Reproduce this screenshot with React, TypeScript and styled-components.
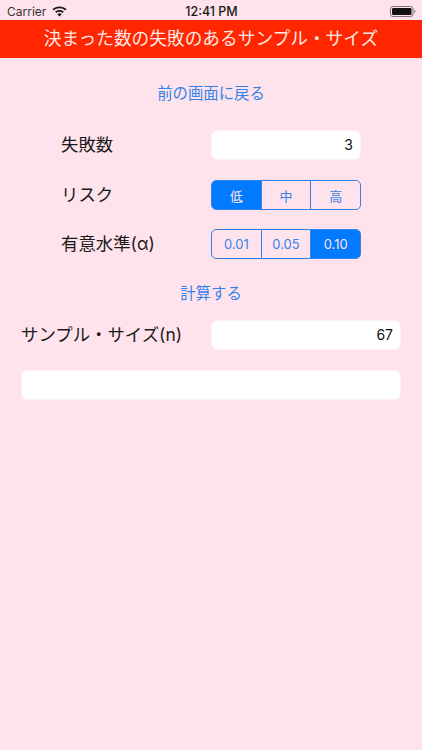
import React, { useState } from 'react'
import styled, { createGlobalStyle } from 'styled-components'

const JP = `Inter, "Noto Sans CJK JP", sans-serif`

const GlobalStyle = createGlobalStyle`
  html, body {
    margin: 0;
    padding: 0;
    background: #ffe3ec;
  }
`

const Screen = styled.div`
  width: 422px;
  height: 750px;
  overflow: hidden;
  background: #ffe3ec;
  font-family: ${JP};
  color: #111;
`

const StatusBar = styled.div`
  height: 20px;
  box-sizing: border-box;
  padding: 2px 6px 0 7px;
  display: grid;
  grid-template-columns: 1fr auto 1fr;
  align-items: center;
  font-size: 12px;
`

const Carrier = styled.div`
  display: flex;
  align-items: center;
  gap: 6px;
  color: #333;
`

const Clock = styled.div`
  font-weight: 500;
  font-size: 12.5px;
  color: #1a1a1a;
`

const BatteryWrap = styled.div`
  display: flex;
  justify-content: flex-end;
`

const Header = styled.div`
  height: 38px;
  background: #ff2600;
  color: #ffe9e4;
  font-size: 17.7px;
  line-height: 38px;
  text-align: center;
  white-space: nowrap;
`

const Body = styled.div`
  padding: 0 21px;
  display: flex;
  flex-direction: column;
`

const LinkButton = styled.button<{ $top: number }>`
  align-self: center;
  margin-top: ${(p) => p.$top}px;
  padding: 0;
  border: 0;
  background: none;
  color: #3583ea;
  font-family: ${JP};
  font-size: 15.4px;
  line-height: 20px;
`

const Row = styled.div<{ $top: number; $inset?: boolean }>`
  display: grid;
  grid-template-columns: ${(p) => (p.$inset ? '150px 150px' : '190px 190px')};
  align-items: center;
  margin-top: ${(p) => p.$top}px;
  padding-left: ${(p) => (p.$inset ? '40px' : '0')};
  height: 30px;
`

const Label = styled.div`
  font-size: 17.4px;
  line-height: 28px;
  color: #1a1a1a;
  white-space: nowrap;
`

const Field = styled.div<{ $full?: boolean }>`
  height: 30px;
  box-sizing: border-box;
  padding: 0 7px;
  background: #fff;
  border: 1px solid #fdf1f5;
  border-radius: 6px;
  font-size: 14px;
  line-height: 28px;
  text-align: right;
  color: #111;
  ${(p) => (p.$full ? 'width: 380px; margin-top: 20px;' : '')}
`

const Segments = styled.div`
  display: flex;
  height: 30px;
  box-sizing: border-box;
  border: 1px solid #3583ea;
  border-radius: 5px;
  overflow: hidden;
`

const Segment = styled.button<{ $active: boolean }>`
  flex: 1;
  padding: 0;
  border: 0;
  border-left: 1px solid #3583ea;
  background: ${(p) => (p.$active ? '#007aff' : 'transparent')};
  color: ${(p) => (p.$active ? '#ffe3ec' : '#3583ea')};
  font-family: ${JP};
  font-size: 13px;
  &:first-child {
    border-left: 0;
  }
`

const SegmentGroup = ({ items, initial }: { items: string[]; initial: number }) => {
  const [active, setActive] = useState(initial)
  return (
    <Segments>
      {items.map((item, i) => (
        <Segment key={item} $active={i === active} onClick={() => setActive(i)}>
          {item}
        </Segment>
      ))}
    </Segments>
  )
}

const WifiIcon = () => (
  <svg width="15" height="11" viewBox="0 0 15 11" fill="#1a1a1a">
    <path d="M7.5 0.4C4.8 0.4 2.4 1.4 0.5 3.1L1.8 4.5C3.3 3.1 5.3 2.3 7.5 2.3s4.2 0.8 5.7 2.2l1.3-1.4C12.6 1.4 10.2 0.4 7.5 0.4z" />
    <path d="M7.5 3.9C5.8 3.9 4.3 4.5 3.1 5.6l1.3 1.4C5.2 6.2 6.3 5.8 7.5 5.8s2.3 0.4 3.1 1.2l1.3-1.4C10.7 4.5 9.2 3.9 7.5 3.9z" />
    <path d="M7.5 7.3c-0.9 0-1.6 0.3-2.2 0.9L7.5 10.6l2.2-2.4C9.1 7.6 8.4 7.3 7.5 7.3z" />
  </svg>
)

const BatteryIcon = () => (
  <svg width="26" height="11" viewBox="0 0 26 11">
    <rect x="0.5" y="0.5" width="22.5" height="10" rx="2.5" fill="none" stroke="#777" />
    <rect x="2" y="2" width="19.5" height="7" rx="1.2" fill="#111" />
    <path d="M24.2 3.8c0.9 0.2 1.3 0.9 1.3 1.7s-0.4 1.5-1.3 1.7z" fill="#888" />
  </svg>
)

export default function App() {
  return (
    <Screen>
      <GlobalStyle />
      <StatusBar>
        <Carrier>
          Carrier
          <WifiIcon />
        </Carrier>
        <Clock>12:41 PM</Clock>
        <BatteryWrap>
          <BatteryIcon />
        </BatteryWrap>
      </StatusBar>
      <Header>決まった数の失敗のあるサンプル・サイズ</Header>
      <Body>
        <LinkButton $top={26}>前の画面に戻る</LinkButton>
        <Row $top={26} $inset>
          <Label>失敗数</Label>
          <Field>3</Field>
        </Row>
        <Row $top={20} $inset>
          <Label>リスク</Label>
          <SegmentGroup items={['低', '中', '高']} initial={0} />
        </Row>
        <Row $top={19} $inset>
          <Label>有意水準(α)</Label>
          <SegmentGroup items={['0.01', '0.05', '0.10']} initial={2} />
        </Row>
        <LinkButton $top={25}>計算する</LinkButton>
        <Row $top={16}>
          <Label>サンプル・サイズ(n)</Label>
          <Field>67</Field>
        </Row>
        <Field $full />
      </Body>
    </Screen>
  )
}
